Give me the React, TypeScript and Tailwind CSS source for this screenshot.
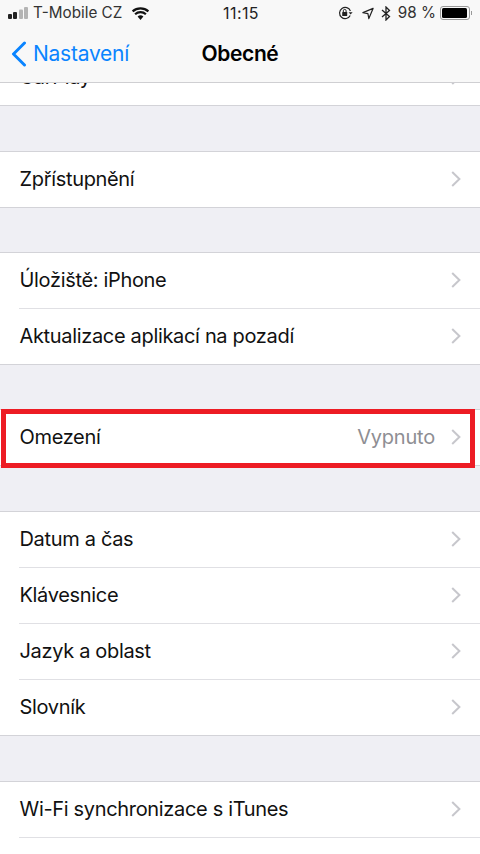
const font = { fontFamily: 'Inter, "Liberation Sans", sans-serif' };

function Chevron() {
  return (
    <svg width="10" height="16" viewBox="0 0 10 16" aria-hidden="true">
      <path d="M1.2 1 8.4 8l-7.2 7" fill="none" stroke="#c7c7cc" strokeWidth="2" />
    </svg>
  );
}

// one settings row; rows with a hairline below are 1px taller than the last one
function Row({ label, value, last }: { label: string; value?: string; last?: boolean }) {
  return (
    <div className={last ? 'flex h-[55px] items-center bg-white pb-[2px] pl-[19.5px] pr-[19px]' : 'relative flex h-[56px] items-center bg-white pb-[3px] pl-[19.5px] pr-[19px]'}>
      <span className="flex-1 text-[20px] tracking-[-0.33px] text-[#111]">{label}</span>
      {value && <span className="mr-[16px] text-[20px] tracking-[-0.2px] text-[#8e8e93]">{value}</span>}
      <Chevron />
      {!last && <div className="absolute bottom-0 left-[19px] right-0 h-px bg-[#e0e0e4]" />}
    </div>
  );
}

function Group({ className, children }: { className?: string; children: React.ReactNode }) {
  return <div className={`border-y border-[#d3d3d8] bg-white ${className ?? ''}`}>{children}</div>;
}

function StatusBar() {
  return (
    <div className="flex h-[26px] items-center justify-between pl-[7px] pr-[8px] text-[15.25px] text-[#333]">
      <div className="flex flex-1 items-center">
        <svg width="22" height="12" viewBox="0 0 22 12" aria-hidden="true">
          <rect x="1" y="7" width="4" height="5" rx="1" fill="#222" />
          <rect x="6" y="5" width="4" height="7" rx="1" fill="#222" />
          <rect x="12" y="2.5" width="4" height="9.5" rx="1" fill="#b4b4b4" />
          <rect x="17" y="0" width="4" height="12" rx="1" fill="#b4b4b4" />
        </svg>
        <span className="ml-[4px]">T-Mobile CZ</span>
        <svg className="ml-[9px]" width="19" height="14" viewBox="0 0 19 14" aria-hidden="true">
          <path d="M9.5 14 6.6 10.6a4.4 4.4 0 0 1 5.8 0Z" fill="#111" />
          <path d="M1.6 5.4a11.8 11.8 0 0 1 15.8 0M4.1 8.3a8 8 0 0 1 10.8 0" fill="none" stroke="#111" strokeWidth="2.2" />
        </svg>
      </div>
      <span className="ml-[3px] text-[16px] tracking-[0.4px] text-[#222]">11:15</span>
      <div className="flex flex-1 items-center justify-end">
        <svg width="16" height="14" viewBox="0 0 16 14" aria-hidden="true">
          <path d="M12.2 9.5A5.6 5.6 0 1 1 12.4 5" fill="none" stroke="#222" strokeWidth="1.2" />
          <path d="M10.6 6.2h4l-2 2.2Z" fill="#222" />
          <rect x="4.2" y="6" width="5" height="4" rx="0.6" fill="#222" />
          <path d="M5.3 6V4.8a1.4 1.4 0 0 1 2.8 0V6" fill="none" stroke="#222" strokeWidth="1" />
        </svg>
        <svg className="ml-[8px]" width="12" height="13" viewBox="0 0 13 13" aria-hidden="true">
          <path d="M12 1 1 5.6l5.4 1 1 5.4Z" fill="none" stroke="#222" strokeWidth="1.3" strokeLinejoin="round" />
        </svg>
        <svg className="ml-[7px]" width="10" height="15" viewBox="0 0 10 15" aria-hidden="true">
          <path d="M1 4l7.5 6.5L5 14V1l3.5 3.5L1 11" fill="none" stroke="#222" strokeWidth="1.3" />
        </svg>
        <span className="ml-[7px]">98 %</span>
        <div className="ml-[4px] flex items-center">
          <div className="h-[14px] w-[30px] rounded-[3px] border border-[#999] p-px">
            <div className="h-full w-[96%] rounded-[1.5px] bg-black" />
          </div>
          <div className="ml-px h-[4px] w-px bg-[#999]" />
        </div>
      </div>
    </div>
  );
}

export default function App() {
  return (
    <div className="flex h-[854px] w-[480px] flex-col overflow-hidden bg-[#efeff4]" style={font}>
      <header className="h-[83px] shrink-0 border-b border-[#cfcfd2] bg-[#f8f8f8]">
        <StatusBar />
        <div className="relative flex h-[56px] items-center justify-center">
          <div className="absolute left-[11px] flex items-center text-[#0a84ff]">
            <svg width="16" height="26" viewBox="0 0 16 26" aria-hidden="true">
              <path d="M13.5 2 2.5 13l11 11" fill="none" stroke="#0a84ff" strokeWidth="3" strokeLinecap="round" strokeLinejoin="round" />
            </svg>
            <span className="ml-[6px] text-[21px] tracking-[-0.25px]">Nastavení</span>
          </div>
          <span className="text-[21px] font-semibold tracking-[-0.4px] text-black">Obecné</span>
        </div>
      </header>

      {/* list is scrolled a little, so the first group slides under the nav bar */}
      <main className="min-h-0 flex-1 overflow-hidden">
        <div className="-mt-[34px] flex flex-col">
          <Group>
            <Row label="CarPlay" last />
          </Group>
          <Group className="mt-[45px]">
            <Row label="Zpřístupnění" last />
          </Group>
          <Group className="mt-[44px]">
            <Row label="Úložiště: iPhone" />
            <Row label="Aktualizace aplikací na pozadí" last />
          </Group>
          <div className="relative mt-[44px]">
            <Group>
              <Row label="Omezení" value="Vypnuto" last />
            </Group>
            <div className="absolute -bottom-[2px] left-[1px] right-[5px] top-0 border-[5px] border-[#ed1c24]" />
          </div>
          <Group className="mt-[45px]">
            <Row label="Datum a čas" />
            <Row label="Klávesnice" />
            <Row label="Jazyk a oblast" />
            <Row label="Slovník" last />
          </Group>
          <Group className="mt-[45px]">
            <Row label="Wi-Fi synchronizace s iTunes" />
            <div className="h-[56px] bg-white" />
          </Group>
        </div>
      </main>
    </div>
  );
}
